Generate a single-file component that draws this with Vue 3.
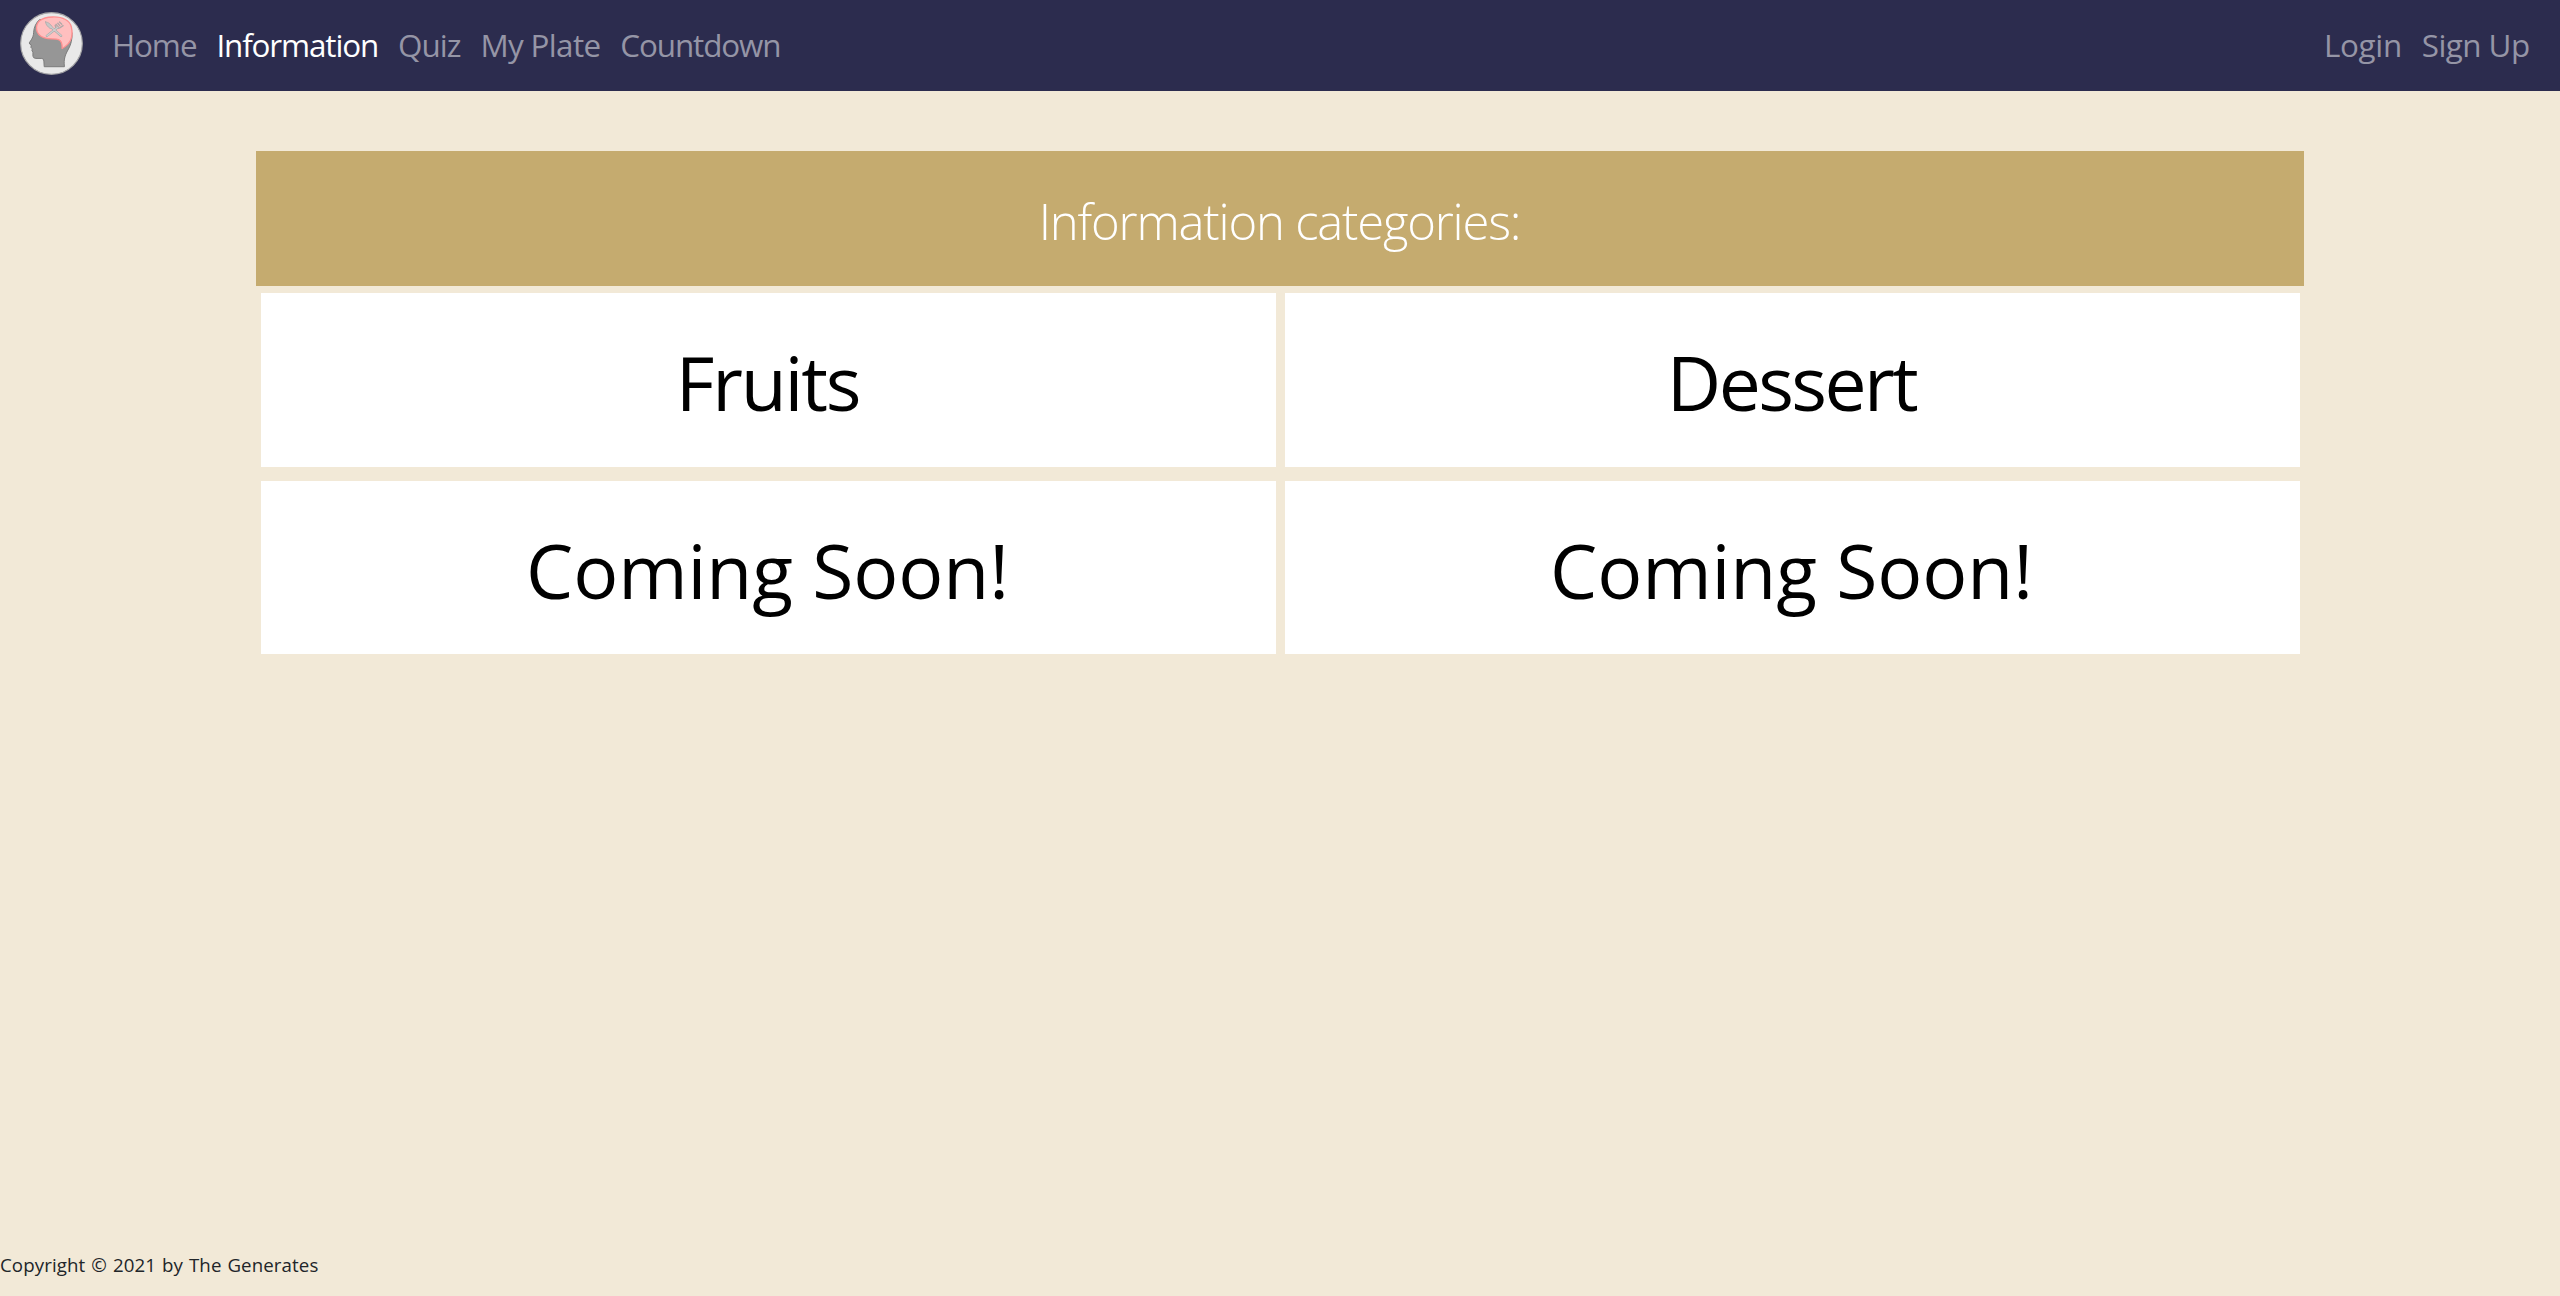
<script setup>
const mainLinks = [
  { label: 'Home', tracking: -1.03 },
  { label: 'Information', tracking: -1.12, active: true },
  { label: 'Quiz', tracking: -0.95 },
  { label: 'My Plate', tracking: -0.65 },
  { label: 'Countdown', tracking: -1.09 },
]
const accountLinks = [
  { label: 'Login', tracking: -0.31 },
  { label: 'Sign Up', tracking: -0.55 },
]
const categories = [
  { label: 'Fruits', tracking: -2.2 },
  { label: 'Dessert', tracking: -2.6 },
  { label: 'Coming Soon!', tracking: -0.1 },
  { label: 'Coming Soon!', tracking: -0.1 },
]
</script>

<template>
  <div class="page">
    <nav class="navbar">
      <a class="brand" aria-label="The Generates">
        <svg viewBox="60 36 190 190" width="63" height="63">
          <circle cx="155" cy="131" r="93" fill="#e9e9e9" stroke="#a3a3a5" stroke-width="3.5" />
          <path
            d="M120 58 C108 68 102 82 101 98 C101 107 98 113 94 120 L88 129 Q87 133 94 135 L93 143 L97 147 L96 153 L99 157 L99 169 Q100 176 108 176 L126 176 Q132 177 132 184 L133 201 L194 201 C191 177 197 164 206 148 C214 134 218 117 217 98 Z"
            fill="#969696" stroke="#7b7b7b" stroke-width="3" stroke-linejoin="round"
          />
          <path
            d="M110 88 C108 66 123 52 158 51 C190 50 211 62 215 82 C220 105 217 130 187 146 C188 133 184 122 176 119 C166 115 150 120 134 114 C119 109 111 100 110 88 Z"
            fill="#ffbfbf" stroke="#ff9090" stroke-width="4" stroke-linejoin="round"
          />
          <g stroke-linecap="round" fill="none">
            <path d="M152 80 L184 108" stroke="#a5a5a5" stroke-width="7" />
            <path d="M141 108 L174 82" stroke="#a5a5a5" stroke-width="7" />
            <path d="M137 66 C145 65 158 77 157 84 L151 86 C144 81 137 74 137 66 Z" fill="#c6c6c6" stroke="#a5a5a5" stroke-width="2" />
            <path d="M166 76 L168 83 Q174 87 181 83 L190 77 M174 70 L180 77 M179 66 L186 73 M169 73 L174 80" stroke="#b0a9a9" stroke-width="4" />
            <path d="M152 80 L184 108 M141 108 L174 82" stroke="#cdcdcd" stroke-width="4" />
          </g>
        </svg>
      </a>
      <div class="links">
        <a
          v-for="link in mainLinks"
          :key="link.label"
          class="link"
          :class="{ active: link.active }"
          :style="{ letterSpacing: link.tracking + 'px' }"
        >{{ link.label }}</a>
      </div>
      <div class="links account">
        <a
          v-for="link in accountLinks"
          :key="link.label"
          class="link"
          :style="{ letterSpacing: link.tracking + 'px' }"
        >{{ link.label }}</a>
      </div>
    </nav>

    <main class="content">
      <h1 class="title">Information categories:</h1>
      <div class="grid">
        <div
          v-for="(item, i) in categories"
          :key="i"
          class="tile"
          :style="{ letterSpacing: item.tracking + 'px' }"
        >{{ item.label }}</div>
      </div>
    </main>

    <footer class="footer">Copyright © 2021 by The Generates</footer>
  </div>
</template>

<style>
body {
  margin: 0;
  background: #f2e9d7;
}
</style>

<style scoped>
.page {
  display: flex;
  flex-direction: column;
  height: 1296px;
  overflow: hidden;
  background: #f2e9d7;
  font-family: "Open Sans", "Noto Sans", sans-serif;
}
.navbar {
  display: flex;
  align-items: center;
  flex: none;
  box-sizing: border-box;
  height: 91px;
  padding: 0 30.4px 0 20px;
  background: #2c2c4e;
}
.brand {
  display: flex;
  margin: 0 28.9px 4px 0;
}
.links {
  display: flex;
  gap: 19.9px;
  padding-bottom: 2px;
}
.account {
  margin-left: auto;
}
.link {
  font-size: 31.4px;
  line-height: 48px;
  color: #9595a6;
  white-space: nowrap;
}
.link.active {
  color: #fff;
}
.content {
  flex: 1;
  padding: 60px 256px 0;
}
.title {
  box-sizing: border-box;
  height: 135px;
  margin: 0;
  padding: 4px 1px 0 0;
  background: #c5ab6f;
  color: #fff;
  font-size: 49px;
  font-weight: 300;
  line-height: 132px;
  letter-spacing: -1.2px;
  text-align: center;
}
.grid {
  display: grid;
  grid-template-columns: 1fr 1fr;
  grid-template-rows: 174px 173px;
  gap: 14px 9px;
  padding: 7px 4px 0 5px;
}
.tile {
  box-sizing: border-box;
  padding: 4px 2px 0 0;
  background: #fff;
  color: #000;
  font-size: 75px;
  line-height: 171px;
  text-align: center;
}
.footer {
  flex: none;
  height: 51px;
  color: #212529;
  font-size: 18.7px;
  line-height: 40px;
  letter-spacing: 0.1px;
  word-spacing: 1px;
}
</style>
